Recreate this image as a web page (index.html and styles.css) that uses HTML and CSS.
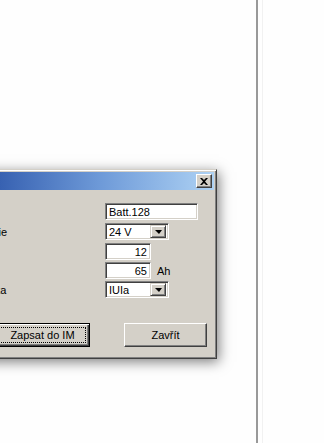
FILE: index.html
```html
<!DOCTYPE html>
<html lang="cs">
<head>
    <meta charset="UTF-8">
    <title>Baterie</title>
    <link rel="stylesheet" href="styles.css">
</head>
<body>
    <div class="desk">
        <div class="pane">
            <div class="dialog">
                <div class="titlebar">
                    <span class="title">Baterie</span>
                    <span class="close">
                        <svg width="8" height="7" viewBox="0 0 8 7"><path d="M0 0h2l2 2 2-2h2L5 3.5 8 7H6L4 5 2 7H0l3-3.5z" fill="#000"/></svg>
                    </span>
                </div>
                <div class="body">
                    <div class="row">
                        <span class="label">Název</span>
                        <div class="field wide">Batt.128</div>
                    </div>
                    <div class="row">
                        <span class="label">Napětí baterie</span>
                        <div class="field combo"><span class="value">24 V</span><span class="drop"><i></i></span></div>
                    </div>
                    <div class="row tight">
                        <span class="label">Články</span>
                        <div class="field num">12</div>
                    </div>
                    <div class="row tight">
                        <span class="label">Kapacita</span>
                        <div class="field num">65</div>
                        <span class="unit">Ah</span>
                    </div>
                    <div class="row last">
                        <span class="label">Použitá křivka</span>
                        <div class="field combo"><span class="value">IUIa</span><span class="drop"><i></i></span></div>
                    </div>

                    <div class="buttons">
                        <div class="btn default"><span class="focus">Zapsat do IM</span></div>
                        <div class="btn">Zavřít</div>
                    </div>
                </div>
            </div>
        </div>
        <div class="divider"></div>
        <div class="rest"></div>
    </div>
</body>
</html>
```

FILE: styles.css
```css
body {
    margin: 0;
    background: #fefefe;
    font-family: "Liberation Sans", Arial, sans-serif;
    font-size: 11px;
    color: #000;
}

.desk {
    display: flex;
    height: 443px;
}

.pane {
    width: 256px;
    flex-shrink: 0;
    box-sizing: border-box;
    overflow: hidden;
    display: flex;
    justify-content: flex-end;
    align-items: flex-start;
    padding-top: 169px;
    padding-right: 39px;
}

.divider {
    width: 2px;
    background: #999;
}

.rest {
    flex: 1;
    margin-left: 4px;
    border-left: 1px solid #f1f1f1;
}

/* okno dialogu */
.dialog {
    width: 290px;
    flex-shrink: 0;
    box-sizing: border-box;
    background: #d4d0c8;
    padding: 2px;
    border: 1px solid;
    border-color: #d4d0c8 #404040 #404040 #d4d0c8;
    box-shadow: inset 1px 1px #fff, inset -1px -1px #808080, 2px 3px 12px rgba(0, 0, 0, 0.5);
}

.titlebar {
    height: 18px;
    display: flex;
    align-items: center;
    justify-content: space-between;
    padding: 0 2px 0 3px;
    background: linear-gradient(to right, #0a246a 0%, #3862b2 25%, #6e9ad8 60%, #aed2f4 100%);
}

.title {
    color: #fff;
    font-weight: bold;
}

.close {
    width: 16px;
    height: 14px;
    box-sizing: border-box;
    display: flex;
    align-items: center;
    justify-content: center;
    background: #d4d0c8;
    border: 1px solid;
    border-color: #fff #404040 #404040 #fff;
    box-shadow: inset -1px -1px #808080;
}

.body {
    padding: 13px 7px 9px 8px;
}

.row {
    display: flex;
    align-items: center;
    height: 17px;
    margin-bottom: 3px;
}

.row.tight {
    margin-bottom: 2px;
}

.row.last {
    margin-bottom: 0;
}

.label {
    width: 167px;
    flex-shrink: 0;
    white-space: nowrap;
}

.field {
    height: 17px;
    box-sizing: border-box;
    display: flex;
    align-items: center;
    padding: 0 3px;
    background: #fff;
    border: 1px solid;
    border-color: #808080 #fff #fff #808080;
    box-shadow: inset 1px 1px #404040, inset -1px -1px #d4d0c8;
}

.field.wide {
    width: 93px;
}

.field.num {
    width: 46px;
    justify-content: flex-end;
}

.unit {
    margin-left: 6px;
}

.field.combo {
    width: 64px;
    padding: 0 2px 0 3px;
    justify-content: space-between;
}

.drop {
    width: 16px;
    height: 13px;
    box-sizing: border-box;
    display: flex;
    align-items: center;
    justify-content: center;
    background: #d4d0c8;
    border: 1px solid;
    border-color: #d4d0c8 #404040 #404040 #d4d0c8;
    box-shadow: inset 1px 1px #fff, inset -1px -1px #808080;
}

.drop i {
    width: 0;
    height: 0;
    border-left: 4px solid transparent;
    border-right: 3px solid transparent;
    border-top: 4px solid #000;
}

.buttons {
    display: flex;
    justify-content: flex-end;
    gap: 34px;
    margin-top: 25px;
}

.btn {
    width: 83px;
    height: 24px;
    box-sizing: border-box;
    display: flex;
    align-items: center;
    justify-content: center;
    border: 1px solid;
    border-color: #fff #404040 #404040 #fff;
    box-shadow: inset -1px -1px #808080;
}

.btn.default {
    width: 95px;
    padding: 3px;
    border: 1px solid #000;
    box-shadow: inset 1px 1px #fff, inset -1px -1px #404040, inset -2px -2px #808080;
}

.focus {
    flex: 1;
    align-self: stretch;
    display: flex;
    align-items: center;
    justify-content: center;
    border: 1px dotted #000;
}
```
